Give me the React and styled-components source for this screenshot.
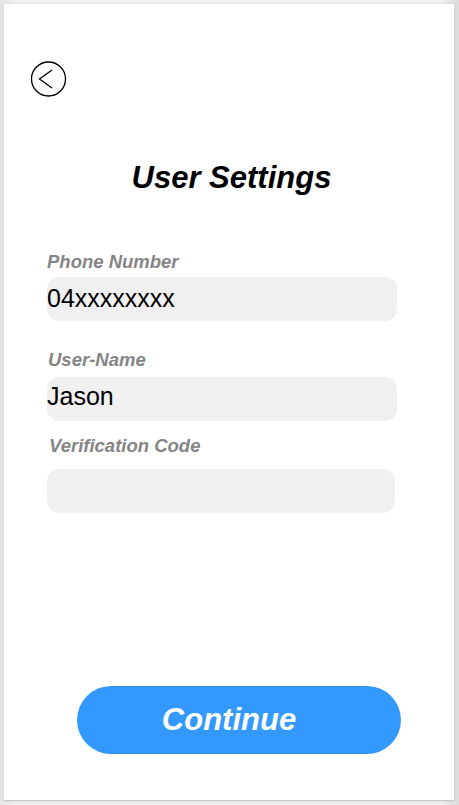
import { createGlobalStyle } from 'styled-components';
import styled from 'styled-components';

const GlobalStyle = createGlobalStyle`
  html, body {
    margin: 0;
    padding: 0;
    background: #ececec;
    font-family: "Liberation Sans", Arial, sans-serif;
  }
`;

const Screen = styled.div`
  width: 459px;
  height: 805px;
  box-sizing: border-box;
  padding: 4px 5px 4px 4px;
  background: linear-gradient(90deg, #e6e6e6 0%, #f4f4f4 4%, #f4f4f4 96%, #dcdcdc 100%);
`;

const Card = styled.div`
  height: 797px;
  background: #fff;
  box-shadow: 0 0 4px rgba(0, 0, 0, 0.12);
  border-bottom: 1px solid #c8c8c8;
  display: flex;
  flex-direction: column;
  box-sizing: border-box;
  padding: 57px 0 0 27px;
`;

const BackButton = styled.button`
  width: 36px;
  height: 36px;
  padding: 0;
  border: none;
  background: none;
  cursor: pointer;
  display: block;
`;

const Title = styled.h1`
  margin: 63px 0 0 -27px;
  text-align: center;
  font-size: 31px;
  line-height: 36px;
  font-weight: bold;
  font-style: italic;
  color: #000;
  padding-left: 5px;
`;

const Form = styled.div`
  display: flex;
  flex-direction: column;
  margin-top: 56px;
  padding-left: 16px;
`;

const Label = styled.label`
  font-size: 18.5px;
  font-weight: bold;
  font-style: italic;
  color: #858585;
  line-height: 20px;
  margin: ${(p) => p.$top}px 0 0 ${(p) => p.$shift}px;
`;

const Field = styled.div`
  width: ${(p) => p.$w}px;
  height: 44px;
  margin-top: ${(p) => p.$gap}px;
  background: #f0f0f0;
  border-radius: 12px;
  font-size: 25px;
  color: #000;
  display: flex;
  align-items: center;
  padding-bottom: ${(p) => p.$lift || 1}px;
  box-sizing: border-box;
`;

const ContinueButton = styled.button`
  margin: auto 0 46px 46px;
  width: 324px;
  height: 68px;
  border: none;
  border-radius: 34px;
  background: #3399ff;
  color: #fff;
  font-family: "Liberation Sans", Arial, sans-serif;
  font-size: 31px;
  font-weight: bold;
  font-style: italic;
  padding-right: 26px;
  cursor: pointer;
`;

function BackIcon() {
  return (
    <svg width="36" height="36" viewBox="0 0 36 36">
      <circle cx="17.5" cy="18" r="17" fill="none" stroke="#000" strokeWidth="1.3" />
      <path d="M21 9 L8.5 18 L21 27" fill="none" stroke="#000" strokeWidth="1.3" />
    </svg>
  );
}

function App() {
  return (
    <Screen>
      <GlobalStyle />
      <Card>
        <BackButton aria-label="back"><BackIcon /></BackButton>
        <Title>User Settings</Title>
        <Form>
          <Label $top={0} $shift={0}>Phone Number</Label>
          <Field $w={350} $gap={5}>04xxxxxxxx</Field>
          <Label $top={29} $shift={1}>User-Name</Label>
          <Field $w={350} $gap={7} $lift={6}>Jason</Field>
          <Label $top={15} $shift={2}>Verification Code</Label>
          <Field $w={348} $gap={13}></Field>
        </Form>
        <ContinueButton>Continue</ContinueButton>
      </Card>
    </Screen>
  );
}

export default App;
